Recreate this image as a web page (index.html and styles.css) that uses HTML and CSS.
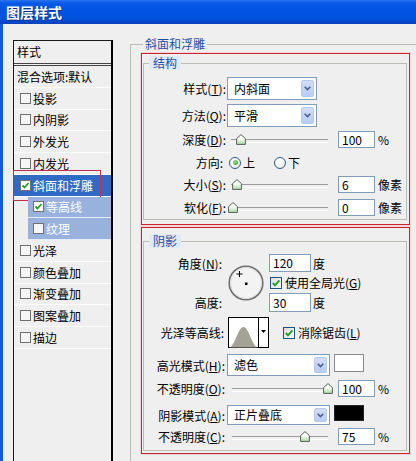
FILE: index.html
```html
<!DOCTYPE html>
<html>
<head>
<meta charset="utf-8">
<link rel="stylesheet" href="styles.css">
</head>
<body>
<svg class="defs" width="0" height="0">
  <defs>
    <linearGradient id="tg" x1="0" y1="0" x2="0" y2="1">
      <stop offset="0" stop-color="#ffffff"/>
      <stop offset="0.45" stop-color="#f4fbf2"/>
      <stop offset="1" stop-color="#a9dca0"/>
    </linearGradient>
  </defs>
</svg>
<div class="window">
  <div class="titlebar">图层样式</div>
  <div class="client">
    <div class="list">
      <div class="list-head">样式</div>
      <div class="item plain">混合选项:默认</div>
      <div class="item"><span class="cb"></span>投影</div>
      <div class="item"><span class="cb"></span>内阴影</div>
      <div class="item"><span class="cb"></span>外发光</div>
      <div class="item"><span class="cb"></span>内发光</div>
      <div class="item selected"><span class="cb on"><svg width="9" height="9" viewBox="0 0 9 9"><path d="M1.5 4.5 L3.5 6.5 L7.5 2" fill="none" stroke="#21a121" stroke-width="1.8"/></svg></span>斜面和浮雕</div>
      <div class="item sub"><div class="subin"><span class="cb on"><svg width="9" height="9" viewBox="0 0 9 9"><path d="M1.5 4.5 L3.5 6.5 L7.5 2" fill="none" stroke="#21a121" stroke-width="1.8"/></svg></span>等高线</div></div>
      <div class="item sub"><div class="subin"><span class="cb"></span>纹理</div></div>
      <div class="item"><span class="cb"></span>光泽</div>
      <div class="item"><span class="cb"></span>颜色叠加</div>
      <div class="item"><span class="cb"></span>渐变叠加</div>
      <div class="item"><span class="cb"></span>图案叠加</div>
      <div class="item"><span class="cb"></span>描边</div>
    </div>

    <div class="main">
      <div class="group outer">
        <div class="legend outer-legend">斜面和浮雕</div>

        <div class="mark mark1">
          <div class="group inner">
            <div class="legend inner-legend">结构</div>

            <div class="row r1">
              <div class="lbl slbl">样式(<u>T</u>):</div>
              <div class="select w90"><span class="val">内斜面</span><span class="btn"><svg width="7" height="5" viewBox="0 0 7 5"><path d="M0.7 0.7 L3.5 3.6 L6.3 0.7" fill="none" stroke="#4a5f88" stroke-width="1.6"/></svg></span></div>
            </div>
            <div class="row r2">
              <div class="lbl slbl">方法(<u>Q</u>):</div>
              <div class="select w90"><span class="val">平滑</span><span class="btn"><svg width="7" height="5" viewBox="0 0 7 5"><path d="M0.7 0.7 L3.5 3.6 L6.3 0.7" fill="none" stroke="#4a5f88" stroke-width="1.6"/></svg></span></div>
            </div>
            <div class="row r3">
              <div class="lbl slbl">深度(<u>D</u>):</div>
              <div class="slider sslider"><span class="thumb" style="left:8px"><svg width="10" height="11" viewBox="0 0 10 11"><path d="M5 0.6 L9.4 4.6 V10.4 H0.6 V4.6 Z" fill="url(#tg)" stroke="#55605a" stroke-width="1"/></svg></span></div>
              <div class="input">100</div>
              <div class="unit">%</div>
            </div>
            <div class="row r4">
              <div class="lbl slbl dir">方向:</div>
              <span class="radio on"></span><span class="rtext">上</span>
              <span class="radio second"></span><span class="rtext">下</span>
            </div>
            <div class="row r5">
              <div class="lbl slbl">大小(<u>S</u>):</div>
              <div class="slider sslider"><span class="thumb" style="left:4px"><svg width="10" height="11" viewBox="0 0 10 11"><path d="M5 0.6 L9.4 4.6 V10.4 H0.6 V4.6 Z" fill="url(#tg)" stroke="#55605a" stroke-width="1"/></svg></span></div>
              <div class="input">6</div>
              <div class="unit">像素</div>
            </div>
            <div class="row r6">
              <div class="lbl slbl">软化(<u>F</u>):</div>
              <div class="slider sslider"><span class="thumb" style="left:0px"><svg width="10" height="11" viewBox="0 0 10 11"><path d="M5 0.6 L9.4 4.6 V10.4 H0.6 V4.6 Z" fill="url(#tg)" stroke="#55605a" stroke-width="1"/></svg></span></div>
              <div class="input">0</div>
              <div class="unit">像素</div>
            </div>
          </div>
        </div>

        <div class="mark mark2">
          <div class="group inner shadow">
            <div class="legend inner-legend">阴影</div>

            <div class="angle">
              <div class="lbl alabel a1">角度(<u>N</u>):</div>
              <div class="dial">
                <svg width="38" height="38" viewBox="0 0 38 38">
                  <circle cx="19" cy="19" r="16.8" fill="#f3f3f3" stroke="#6e6e6e" stroke-width="1.6"/>
                  <circle cx="19" cy="19" r="15.5" fill="none" stroke="#d8d8d8" stroke-width="0.8"/>
                  <path d="M12.5 7 V13 M9.5 10 H15.5" stroke="#000" stroke-width="1"/>
                  <rect x="18" y="18.5" width="2.5" height="2.5" fill="#000"/>
                </svg>
              </div>
              <div class="actl a1c"><div class="input w42">120</div><span class="unit2">度</span></div>
              <div class="actl a2c"><span class="cb2"><svg width="10" height="10" viewBox="0 0 10 10"><path d="M1.8 5 L4 7.3 L8.4 2.3" fill="none" stroke="#21a121" stroke-width="1.9"/></svg></span><span>使用全局光(<u>G</u>)</span></div>
              <div class="lbl alabel a3">高度:</div>
              <div class="actl a3c"><div class="input w42 h19">30</div><span class="unit2">度</span></div>
            </div>

            <div class="row contour-row">
              <div class="lbl clbl">光泽等高线:</div>
              <div class="contour">
                <svg width="41" height="31" viewBox="0 0 41 31">
                  <rect x="0.5" y="0.5" width="40" height="30" fill="#fff" stroke="#000"/>
                  <path d="M1 30.5 C 7 30, 10 10, 15.5 10 C 21 10, 24 30, 30 30.5 Z" fill="#a3a294"/>
                  <line x1="30.5" y1="0.5" x2="30.5" y2="30.5" stroke="#000"/>
                  <path d="M33 13 H38 L35.5 16 Z" fill="#000"/>
                </svg>
              </div>
              <span class="cb2 aa"><svg width="10" height="10" viewBox="0 0 10 10"><path d="M1.8 5 L4 7.3 L8.4 2.3" fill="none" stroke="#21a121" stroke-width="1.9"/></svg></span><span>消除锯齿(<u>L</u>)</span>
            </div>

            <div class="row hl-row">
              <div class="lbl clbl2">高光模式(<u>H</u>):</div>
              <div class="select w103 h22"><span class="val">滤色</span><span class="btn"><svg width="7" height="5" viewBox="0 0 7 5"><path d="M0.7 0.7 L3.5 3.6 L6.3 0.7" fill="none" stroke="#4a5f88" stroke-width="1.6"/></svg></span></div>
              <div class="swatch white"></div>
            </div>

            <div class="row op1">
              <div class="lbl clbl2">不透明度(<u>O</u>):</div>
              <div class="slider hslider"><span class="thumb" style="left:96px"><svg width="10" height="11" viewBox="0 0 10 11"><path d="M5 0.6 L9.4 4.6 V10.4 H0.6 V4.6 Z" fill="url(#tg)" stroke="#55605a" stroke-width="1"/></svg></span></div>
              <div class="input">100</div>
              <div class="unit">%</div>
            </div>

            <div class="row sh-row">
              <div class="lbl clbl2">阴影模式(<u>A</u>):</div>
              <div class="select w103 h20"><span class="val">正片叠底</span><span class="btn"><svg width="7" height="5" viewBox="0 0 7 5"><path d="M0.7 0.7 L3.5 3.6 L6.3 0.7" fill="none" stroke="#4a5f88" stroke-width="1.6"/></svg></span></div>
              <div class="swatch black"></div>
            </div>

            <div class="row op2">
              <div class="lbl clbl2">不透明度(<u>C</u>):</div>
              <div class="slider hslider"><span class="thumb" style="left:73px"><svg width="10" height="11" viewBox="0 0 10 11"><path d="M5 0.6 L9.4 4.6 V10.4 H0.6 V4.6 Z" fill="url(#tg)" stroke="#55605a" stroke-width="1"/></svg></span></div>
              <div class="input">75</div>
              <div class="unit">%</div>
            </div>
          </div>
        </div>
      </div>
    </div>
  </div>
</div>
</body>
</html>
```
FILE: styles.css
```css
* { box-sizing: border-box; }
html, body { margin: 0; padding: 0; }
body {
  width: 416px;
  height: 461px;
  overflow: hidden;
  background: #efefef;
  font-family: "Noto Sans CJK SC", "Noto Sans", sans-serif;
  font-size: 12px;
  color: #000;
}
u { text-decoration: underline; text-underline-offset: 1px; }
.defs { position: absolute; width: 0; height: 0; }

.window {
  width: 416px;
  height: 461px;
  overflow: hidden;
  display: flex;
  flex-direction: column;
}
.titlebar {
  height: 24px;
  flex: none;
  background: linear-gradient(#2a74ee 0%, #0a5ae6 12%, #0054e3 45%, #0050dc 80%, #0a40b8 100%);
  color: #fff;
  font-weight: bold;
  font-size: 14px;
  line-height: 24px;
  padding-left: 6px;
  letter-spacing: 0;
  text-shadow: 1px 1px 0 #0b2f86;
}
.client {
  flex: 1;
  display: flex;
  align-items: flex-start;
  border-left: 3px solid #1657d9;
  background: #efefef;
  overflow: hidden;
}

/* ---------- style list ---------- */
.list {
  flex: none;
  width: 100px;
  height: 440px;
  margin-left: 10px;
  margin-top: 16px;
  border: 1px solid #1a1a1a;
  border-right: 2px solid #000;
  background: #efefef;
}
.list-head {
  height: 25px;
  line-height: 22px;
  padding-left: 3px;
  border-bottom: 3px double #444;
}
.item {
  position: relative;
  height: 21.75px;
  border-bottom: 1px solid #fbfbfb;
  display: flex;
  align-items: center;
  padding-left: 6px;
  white-space: nowrap;
}
.item.plain { padding-left: 3px; }
.cb {
  flex: none;
  width: 11px;
  height: 11px;
  margin-right: 2px;
  border: 1px solid #707070;
  background: #f6f6f6;
  display: flex;
  align-items: center;
  justify-content: center;
}
.cb.on { background: #fff; }
.item.selected {
  background: #316ac5;
  color: #fff;
}
.item.selected::after {
  content: "";
  position: absolute;
  left: -1px;
  top: -5px;
  width: 86px;
  height: 29px;
  border: 1px solid #c4304c;
}
.item.sub { padding-left: 14px; border-bottom: none; }
.subin {
  flex: 1;
  height: 100%;
  background: #98b1dd;
  color: #fff;
  display: flex;
  align-items: center;
  padding-left: 5px;
  border-bottom: 1px solid #e6ecf6;
}

/* ---------- right side ---------- */
.main {
  flex: none;
  margin-left: 17px;
  margin-top: 20px;
}
.group {
  border: 1px solid #b9bdb5;
}
.group.outer {
  width: 300px;
  height: 440px;
}
.legend {
  display: block;
  width: max-content;
  height: 14px;
  line-height: 14px;
  margin-top: -8px;
  background: #efefef;
  color: #1f4fa6;
}
.outer-legend { margin-left: 12px; padding: 0 2px; }
.inner-legend {
  margin-left: 5px;
  padding: 0 4px;
  background: #e0e9f4;
  border-radius: 2px;
}

.mark {
  width: 269px;
  margin-left: 10px;
  border: 1px solid #c8232f;
  box-shadow: 0 0 0 1px rgba(255, 170, 170, 0.35);
}
.mark1 { margin-top: 2px; height: 172px; }
.mark2 { margin-top: 2px; height: 227px; }

.group.inner {
  width: 264px;
  margin-left: 1px;
  margin-top: 9px;
  padding-bottom: 3px;
}
.group.inner.shadow {
  margin-top: 13px;
  padding-bottom: 5px;
}

.row {
  display: flex;
  align-items: center;
  white-space: nowrap;
}
.lbl { flex: none; text-align: right; }
.slbl { width: 82px; padding-right: 0; }
.slbl.dir { padding-right: 3px; }

.r1 { margin-top: 7px; height: 23px; }
.r2 { margin-top: 4px; height: 23px; }
.r3 { margin-top: 4px; height: 17px; }
.r4 { margin-top: 6px; height: 17px; }
.r5 { margin-top: 5px; height: 17px; }
.r6 { margin-top: 6px; height: 17px; }

.select {
  flex: none;
  display: flex;
  align-items: center;
  height: 23px;
  margin-left: 1px;
  padding: 2px;
  border: 1px solid #7f9db9;
  background: #fff;
}
.select .val { flex: 1; padding-left: 4px; line-height: 14px; }
.select .btn {
  flex: none;
  width: 13px;
  height: 100%;
  border: 1px solid #b6c8ef;
  border-radius: 2px;
  background: linear-gradient(#d2def9, #b7cbf5);
  display: flex;
  align-items: center;
  justify-content: center;
}
.w90 { width: 90px; }
.w103 { width: 103px; }
.h22 { height: 22px; }
.h20 { height: 20px; }

.slider {
  position: relative;
  flex: none;
  height: 17px;
}
.slider::before {
  content: "";
  position: absolute;
  top: 8px;
  height: 2px;
  border-top: 1px solid #9c9c9c;
  border-bottom: 1px solid #fdfdfd;
}
.sslider { width: 100px; margin-left: 2px; }
.sslider::before { left: 3px; right: 0; }
.hslider { width: 106px; }
.hslider::before { left: 5px; right: 5px; }
.thumb {
  position: absolute;
  top: 3px;
  width: 10px;
  height: 11px;
  display: block;
}
.thumb svg { display: block; }

.input {
  flex: none;
  width: 37px;
  height: 17px;
  margin-left: 10px;
  padding-left: 3px;
  border: 1px solid #7f9db9;
  background: #fff;
  line-height: 15px;
}
.shadow .row .input { margin-left: 5px; }
.unit { margin-left: 3px; }

.radio {
  flex: none;
  width: 12px;
  height: 12px;
  margin-left: 3px;
  border-radius: 50%;
  border: 1px solid #2a5a8a;
  background: radial-gradient(circle at 40% 35%, #ffffff 30%, #dedbd2 100%);
  position: relative;
}
.radio.on::after {
  content: "";
  position: absolute;
  left: 2.5px;
  top: 2.5px;
  width: 5px;
  height: 5px;
  border-radius: 50%;
  background: radial-gradient(circle at 40% 35%, #8de08a, #21a121);
}
.rtext { margin-left: 2px; }
.radio.second { margin-left: 19px; }

/* angle block */
.angle {
  display: grid;
  grid-template-columns: 83px 38px auto;
  grid-template-rows: 18px 21px 19px;
  margin-top: 6px;
  white-space: nowrap;
}
.alabel { padding-right: 5px; align-self: center; }
.a1 { grid-column: 1; grid-row: 1; }
.a3 { grid-column: 1; grid-row: 3; }
.dial { grid-column: 2; grid-row: 1 / 4; align-self: center; height: 38px; }
.dial svg { display: block; }
.actl { display: flex; align-items: center; padding-left: 4px; }
.a1c { grid-column: 3; grid-row: 1; }
.a2c { grid-column: 3; grid-row: 2; align-self: end; margin-bottom: 2px; padding-left: 5px; }
.a3c { grid-column: 3; grid-row: 3; }
.angle .input { margin-left: 0; }
.w42 { width: 42px; height: 18px; line-height: 16px; }
.h19 { height: 19px; line-height: 17px; }
.unit2 { margin-left: 2px; }

.cb2 {
  flex: none;
  width: 12px;
  height: 12px;
  margin-right: 3px;
  border: 1px solid #1c5180;
  background: linear-gradient(135deg, #dcdcd7, #ffffff);
  display: flex;
  align-items: center;
  justify-content: center;
}

.contour-row { margin-top: 5px; height: 31px; }
.clbl { width: 83px; padding-right: 3px; }
.contour { flex: none; width: 41px; height: 31px; margin-left: 1px; }
.contour svg { display: block; }
.cb2.aa { margin-left: 14px; }

.clbl2 { width: 83px; padding-right: 2px; }
.hl-row { margin-top: 6px; height: 22px; }
.op1 { margin-top: 4px; height: 17px; }
.sh-row { margin-top: 8px; height: 20px; }
.op2 { margin-top: 3px; height: 17px; }
.hl-row .select, .sh-row .select { margin-left: 0; }

.swatch {
  flex: none;
  width: 30px;
  margin-left: 4px;
  align-self: flex-start;
}
.swatch.white { height: 18px; border: 1px solid #8a8a8a; background: #fff; }
.swatch.black { height: 16px; background: #000; border: 1px solid #222; }
```
